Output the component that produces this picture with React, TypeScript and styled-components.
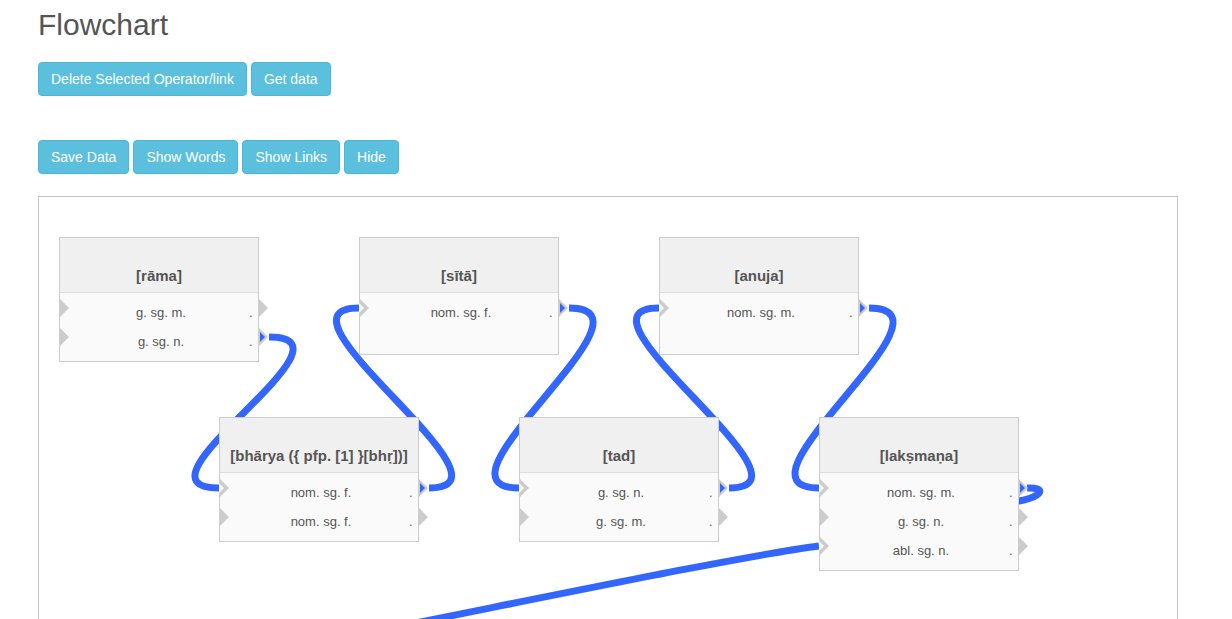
import React from "react";
import styled, { createGlobalStyle } from "styled-components";

const GlobalStyle = createGlobalStyle`
  html, body { margin: 0; padding: 0; background: #fff; }
  body { font-family: "Liberation Sans", Arial, sans-serif; color: #333; overflow: hidden; }
`;

const Page = styled.div`
  padding: 8px 0 0 38px;
`;

const Heading = styled.h1`
  margin: 0 0 21px;
  font-size: 30px;
  line-height: 33px;
  font-weight: 400;
  color: #555;
`;

const Toolbar = styled.div<{ $gapBelow: number }>`
  display: flex;
  gap: 4px;
  margin-bottom: ${(p) => p.$gapBelow}px;
`;

const Button = styled.button`
  height: 34px;
  padding: 6px 12px;
  font-family: "Liberation Sans", Arial, sans-serif;
  font-size: 14px;
  line-height: 20px;
  color: #fff;
  background: #5bc0de;
  border: 1px solid #46b8da;
  border-radius: 4px;
  cursor: pointer;
  white-space: nowrap;
`;

const Canvas = styled.div`
  position: relative;
  width: 1140px;
  height: 500px;
  box-sizing: border-box;
  border: 1px solid #c2c2c2;
  overflow: hidden;
`;

const LinksLayer = styled.svg`
  position: absolute;
  left: 0;
  top: 0;
  width: 100%;
  height: 100%;
  z-index: 0;
`;

const Operator = styled.div`
  position: absolute;
  z-index: 1;
  width: 200px;
  box-sizing: border-box;
  border: 1px solid #ccc;
  background: #fafafa;
`;

const Title = styled.div`
  padding: 28px 5px 6px;
  line-height: 20px;
  font-size: 15px;
  font-weight: 700;
  color: #555;
  text-align: center;
  background: #f0f0f0;
  border-bottom: 1px solid #ddd;
  white-space: nowrap;
  overflow: hidden;
`;

const Body = styled.div`
  box-sizing: border-box;
  min-height: 61px;
  padding: 5px 0;
`;

const Row = styled.div`
  position: relative;
  height: 29px;
  display: flex;
  align-items: center;
  font-size: 13px;
  color: #555;
`;

const Label = styled.span`
  flex: 1;
  text-align: center;
  padding-left: 20px;
`;

const Dot = styled.span`
  width: 16px;
  box-sizing: border-box;
  padding-left: 7px;
  color: #7a5a48;
`;

const Arrow = styled.span<{ $side: "in" | "out" }>`
  position: absolute;
  top: 0;
  width: 0;
  height: 0;
  border-top: 10px solid transparent;
  border-bottom: 10px solid transparent;
  border-left: 10px solid #ccc;
  ${(p) => (p.$side === "in" ? "left: -1px;" : "right: -10px;")}
`;

const SmallArrow = styled.span<{ $side: "in" | "out" }>`
  position: absolute;
  top: 5px;
  width: 0;
  height: 0;
  border-top: 5px solid transparent;
  border-bottom: 5px solid transparent;
  border-left: 5px solid ${(p) => (p.$side === "in" ? "#fafafa" : "#3366ff")};
  ${(p) => (p.$side === "in" ? "left: -1px;" : "right: -7px;")}
`;

type RowData = { label: string; inLinked?: boolean; outLinked?: boolean };
type OpData = { id: string; title: string; x: number; y: number; rows: RowData[] };

const operators: OpData[] = [
  { id: "rama", title: "[rāma]", x: 20, y: 40, rows: [{ label: "g. sg. m." }, { label: "g. sg. n.", outLinked: true }] },
  { id: "sita", title: "[sītā]", x: 320, y: 40, rows: [{ label: "nom. sg. f.", inLinked: true, outLinked: true }] },
  { id: "anuja", title: "[anuja]", x: 620, y: 40, rows: [{ label: "nom. sg. m.", inLinked: true, outLinked: true }] },
  {
    id: "bharya",
    title: "[bhārya ({ pfp. [1] }[bhṛ])]",
    x: 180,
    y: 220,
    rows: [{ label: "nom. sg. f.", inLinked: true, outLinked: true }, { label: "nom. sg. f." }],
  },
  {
    id: "tad",
    title: "[tad]",
    x: 480,
    y: 220,
    rows: [{ label: "g. sg. n.", inLinked: true, outLinked: true }, { label: "g. sg. m." }],
  },
  {
    id: "laksmana",
    title: "[lakṣmaṇa]",
    x: 780,
    y: 220,
    rows: [
      { label: "nom. sg. m.", inLinked: true, outLinked: true },
      { label: "g. sg. n." },
      { label: "abl. sg. n.", inLinked: true },
    ],
  },
];

const byId = (id: string) => operators.find((o) => o.id === id)!;
const outPt = (id: string, row: number) => {
  const o = byId(id);
  return { x: o.x + 210, y: o.y + 71 + 29 * row };
};
const inPt = (id: string, row: number) => {
  const o = byId(id);
  return { x: o.x, y: o.y + 71 + 29 * row };
};
const bezier = (a: { x: number; y: number }, b: { x: number; y: number }) => {
  const k = 100;
  return `M${a.x},${a.y} C${a.x + k},${a.y} ${b.x - k},${b.y} ${b.x},${b.y}`;
};

const links: string[] = [
  bezier(outPt("rama", 1), inPt("bharya", 0)),
  bezier(outPt("bharya", 0), inPt("sita", 0)),
  bezier(outPt("sita", 0), inPt("tad", 0)),
  bezier(outPt("tad", 0), inPt("anuja", 0)),
  bezier(outPt("anuja", 0), inPt("laksmana", 0)),
  "M988,291 C1006,290 1006,299 980,304 L880,340",
  "M181,464 C381,427 680,362 780,349",
];

export default function App() {
  return (
    <>
      <GlobalStyle />
      <Page>
        <Heading>Flowchart</Heading>
        <Toolbar $gapBelow={44}>
          <Button>Delete Selected Operator/link</Button>
          <Button>Get data</Button>
        </Toolbar>
        <Toolbar $gapBelow={22}>
          <Button>Save Data</Button>
          <Button>Show Words</Button>
          <Button>Show Links</Button>
          <Button>Hide</Button>
        </Toolbar>
        <Canvas>
          <LinksLayer>
            {links.map((d, i) => (
              <path key={i} d={d} fill="none" stroke="#3366ff" strokeWidth={7} />
            ))}
          </LinksLayer>
          {operators.map((op) => (
            <Operator key={op.id} style={{ left: op.x, top: op.y }}>
              <Title>{op.title}</Title>
              <Body>
                {op.rows.map((r, i) => (
                  <Row key={i}>
                    <Arrow $side="in" />
                    {r.inLinked && <SmallArrow $side="in" />}
                    <Label>{r.label}</Label>
                    <Dot>.</Dot>
                    <Arrow $side="out" />
                    {r.outLinked && <SmallArrow $side="out" />}
                  </Row>
                ))}
              </Body>
            </Operator>
          ))}
        </Canvas>
      </Page>
    </>
  );
}
